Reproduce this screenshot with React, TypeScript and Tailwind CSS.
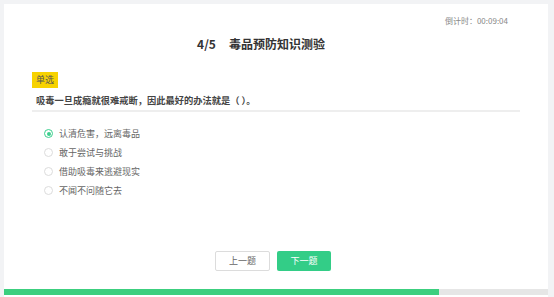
import React, { useState } from "react";

const options = ["认清危害，远离毒品", "敢于尝试与挑战", "借助吸毒来逃避现实", "不闻不问随它去"];

export default function App() {
  const [selected, setSelected] = useState(0);

  return (
    <div
      className="w-[554px] h-[297px] bg-[#f2f3f5] pl-[4px] pr-[6px] pt-[4px] flex flex-col"
      style={{ fontFamily: '"Noto Sans CJK SC", "Noto Sans", sans-serif' }}
    >
      <div className="flex-1 bg-white flex flex-col">
        {/* Timer */}
        <div className="flex justify-end pt-[11px] pr-[40px] text-[8px] leading-[12px] text-[#888]">
          倒计时：00:09:04
        </div>

        {/* Title */}
        <div className="flex justify-center gap-[13px] mt-[9px] pr-[30px] text-[12px] leading-[16px] font-bold text-[#333]">
          <span>4/5</span>
          <span>毒品预防知识测验</span>
        </div>

        {/* Question */}
        <div className="mt-[12px] ml-[28px] mr-[28px]">
          <span className="inline-block bg-[#f7d200] text-[#555] text-[9px] leading-[16px] px-[4px]">单选</span>
          <div className="mt-[4px] pb-[2px] pl-[4px] border-b-2 border-[#eeeeee] text-[9.25px] leading-[16px] font-bold text-[#444]">
            吸毒一旦成瘾就很难戒断，因此最好的办法就是（ ）。
          </div>
        </div>

        {/* Options */}
        <div className="mt-[12px] ml-[40px] flex flex-col">
          {options.map((opt, i) => (
            <button
              key={opt}
              onClick={() => setSelected(i)}
              className="flex items-center gap-[6px] h-[19px] text-[9px] text-[#666] text-left"
            >
              <span
                className={
                  "w-[9px] h-[9px] rounded-full border flex items-center justify-center " +
                  (selected === i ? "border-[#3ccf8e]" : "border-[#dcdcdc]")
                }
              >
                {selected === i && <span className="w-[4px] h-[4px] rounded-full bg-[#3ccf8e]" />}
              </span>
              {opt}
            </button>
          ))}
        </div>

        {/* Buttons */}
        <div className="mt-auto mb-[18px] flex justify-center gap-[7px] pr-[6px]">
          <button className="w-[55px] h-[20px] border border-[#dcdcdc] bg-white text-[9px] text-[#666] rounded-[2px]">
            上一题
          </button>
          <button className="w-[54px] h-[20px] bg-[#33cd87] text-[9px] text-white rounded-[2px]">下一题</button>
        </div>

        {/* Progress */}
        <div className="h-[6px] bg-[#e6e6e6] mb-[2px]">
          <div className="h-full bg-[#3ccf7f]" style={{ width: `${(4 / 5) * 100}%` }} />
        </div>
      </div>
    </div>
  );
}
